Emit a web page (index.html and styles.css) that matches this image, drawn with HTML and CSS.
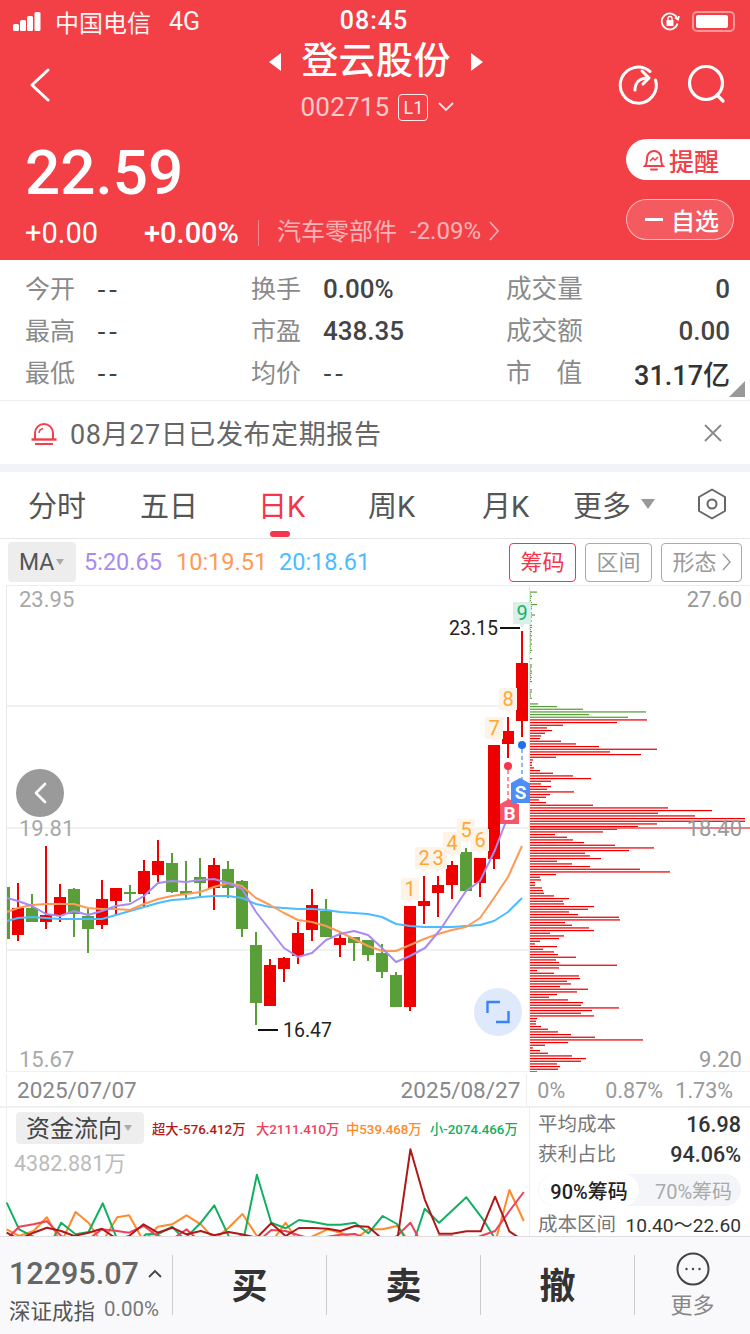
FILE: index.html
```html
<!DOCTYPE html>
<html lang="zh">
<head>
<meta charset="utf-8">
<title>登云股份</title>
<link rel="stylesheet" href="styles.css">
<script src="chart.js" defer></script>
</head>
<body>
<div class="page">
  <header class="head">
    <div class="status">
      <div class="status-left">
        <svg class="signal" width="34" height="22" viewBox="0 0 34 22"><rect x="0" y="14" width="6" height="7" rx="1.5"/><rect x="7" y="10" width="6" height="11" rx="1.5"/><rect x="14" y="6" width="6" height="15" rx="1.5"/><rect x="21.500" y="2" width="6" height="19" rx="1.5"/></svg>
        <span class="carrier">中国电信</span><span class="net">4G</span>
      </div>
      <div class="clock">08:45</div>
      <div class="status-right">
        <svg width="20" height="20" viewBox="0 0 20 20" fill="none" stroke="#fff" stroke-width="1.800"><path d="M17 7A8 8 0 1 0 17.500 12.500"/><path d="M15 6.500l3 2 1-3.500" /><rect x="6.500" y="9" width="7" height="6" fill="#fff" stroke="none"/><path d="M8 9V7.500a2 2 0 0 1 4 0V9" stroke-width="1.300"/></svg>
        <span class="battery"><span class="battery-fill"></span></span>
      </div>
    </div>
    <div class="nav">
      <svg class="back" width="22" height="34" viewBox="0 0 22 34" fill="none" stroke="#fff" stroke-width="3" stroke-linecap="round" stroke-linejoin="round"><path d="M19 2L3 17l16 15"/></svg>
      <div class="nav-mid">
        <div class="title-row"><i class="tri-l"></i><h1 class="title">登云股份</h1><i class="tri-r"></i></div>
        <div class="code-row"><span class="code">002715</span><span class="lv">L1</span><svg width="16" height="10" viewBox="0 0 16 10" fill="none" stroke="#fff" stroke-opacity=".85" stroke-width="1.800"><path d="M1 1l7 7 7-7"/></svg></div>
      </div>
      <div class="nav-icons">
        <svg width="42" height="42" viewBox="0 0 42 42" fill="none" stroke="#fff" stroke-width="3" stroke-linecap="round" stroke-linejoin="round"><path d="M33 8.500A18 18 0 1 0 38.500 17"/><path d="M18 27c0-7 4-12 13-12"/><path d="M25 8l7 7-6 6"/></svg>
        <svg width="42" height="42" viewBox="0 0 42 42" fill="none" stroke="#fff" stroke-width="3.200" stroke-linecap="round"><circle cx="20" cy="20" r="16.500"/><path d="M31 32l6 6"/></svg>
      </div>
    </div>
    <div class="quote">
      <div class="quote-left">
        <div class="price">22.59</div>
        <div class="change">
          <span class="chg1">+0.00</span><span class="chg2">+0.00%</span><i class="bar"></i>
          <span class="sector">汽车零部件</span><span class="sector-val">-2.09%</span>
          <svg width="11" height="20" viewBox="0 0 11 20" fill="none" stroke="#fff" stroke-opacity=".6" stroke-width="1.600"><path d="M1 1l8 9-8 9"/></svg>
        </div>
      </div>
      <div class="quote-right">
        <div class="remind">
          <svg width="24" height="26" viewBox="0 0 24 26" fill="none" stroke="#f0404a" stroke-width="2"><path d="M3 19c2-2 2-4 2-8a7 7 0 0 1 14 0c0 4 0 6 2 8z"/><path d="M9 22.500h6" stroke-linecap="round"/><path d="M8 14l3-3 2 2 3-3" stroke-width="1.500"/></svg>
          <span>提醒</span>
        </div>
        <div class="watch"><i class="dash"></i><span>自选</span></div>
      </div>
    </div>
  </header>

  <section class="info">
    <div class="cell"><span class="lab">今开</span><span class="val val-d">--</span></div>
    <div class="cell"><span class="lab">换手</span><span class="val">0.00%</span></div>
    <div class="cell cell-end"><span class="lab">成交量</span><span class="val">0</span></div>
    <div class="cell"><span class="lab">最高</span><span class="val val-d">--</span></div>
    <div class="cell"><span class="lab">市盈</span><span class="val">438.35</span></div>
    <div class="cell cell-end"><span class="lab">成交额</span><span class="val">0.00</span></div>
    <div class="cell"><span class="lab">最低</span><span class="val val-d">--</span></div>
    <div class="cell"><span class="lab">均价</span><span class="val val-d">--</span></div>
    <div class="cell cell-end"><span class="lab lab-wide">市<b class="sp"></b>值</span><span class="val val-big">31.17亿</span></div>
    <i class="corner"></i>
  </section>

  <section class="notice">
    <svg width="28" height="26" viewBox="0 0 28 26" fill="none" stroke="#f0404a" stroke-width="2"><path d="M5 19v-6a9 9 0 0 1 18 0v6"/><path d="M1.500 19.500h25" stroke-width="2.400"/><path d="M5 24h18" stroke-width="2"/><path d="M9 13a5 5 0 0 1 4-4.500" stroke-width="1.500"/></svg>
    <span class="notice-text">08月27日已发布定期报告</span>
    <svg class="notice-x" width="18" height="18" viewBox="0 0 18 18" stroke="#888" stroke-width="1.800"><path d="M1 1l16 16M17 1L1 17"/></svg>
  </section>

  <nav class="tabs">
    <span class="tab t1">分时</span>
    <span class="tab t2">五日</span>
    <span class="tab t3 on">日K</span>
    <span class="tab t4">周K</span>
    <span class="tab t5">月K</span>
    <span class="tab t6">更多<i class="caret"></i></span>
    <svg class="hex" width="30" height="32" viewBox="0 0 30 32" fill="none" stroke="#666" stroke-width="2"><path d="M15 1.500L28 9v14l-13 7.500L2 23V9z" stroke-linejoin="round"/><circle cx="15" cy="16" r="4.500"/></svg>
  </nav>

  <div class="tools">
    <div class="ma"><span>MA</span><i class="caret-s"></i></div>
    <span class="m5">5:20.65</span><span class="m10">10:19.51</span><span class="m20">20:18.61</span>
    <div class="tool-btns">
      <span class="tbtn tbtn-on">筹码</span>
      <span class="tbtn">区间</span>
      <span class="tbtn tbtn-w">形态<svg width="9" height="18" viewBox="0 0 9 18" fill="none" stroke="#999" stroke-width="1.400"><path d="M1 1l7 8-7 8"/></svg></span>
    </div>
  </div>

  <section class="chart">
    <svg id="kline" class="kline" width="750" height="487" viewBox="0 585 750 487"></svg>
    <span class="ax ax-l a1">23.95</span>
    <span class="ax ax-l a2">19.81</span>
    <span class="ax ax-l a3">15.67</span>
    <span class="ax ax-r a1">27.60</span>
    <span class="ax ax-r a2">18.40</span>
    <span class="ax ax-r a3">9.20</span>
    <span class="hi">23.15</span>
    <span class="lo">16.47</span>
    <span class="seq s1">1</span><span class="seq s2">2</span><span class="seq s3">3</span><span class="seq s4">4</span><span class="seq s5">5</span><span class="seq s6">6</span><span class="seq s7">7</span><span class="seq s8">8</span><span class="seq seq-g s9">9</span>
    <span class="trade b">B</span>
    <span class="trade s">S</span>
    <span class="circle-l"><svg width="14" height="22" viewBox="0 0 14 22" fill="none" stroke="#fff" stroke-width="2.600" stroke-linecap="round" stroke-linejoin="round"><path d="M12 2L3 11l9 9"/></svg></span>
    <span class="circle-r"><svg width="24" height="24" viewBox="0 0 24 24" fill="none" stroke="#3b82f6" stroke-width="2.400"><path d="M1.500 13V2H14M22.500 11v11H10"/></svg></span>
  </section>

  <div class="dates">
    <div class="dates-l"><span>2025/07/07</span><span>2025/08/27</span></div>
    <div class="dates-r"><span class="p0">0%</span><span>0.87%</span><span>1.73%</span></div>
  </div>

  <section class="lower">
    <div class="flow">
      <div class="flow-head">
        <div class="flow-chip"><span>资金流向</span><i class="caret-s"></i></div>
        <div class="legend"><span class="l1">超大-576.412万</span><span class="l2">大2111.410万</span><span class="l3">中539.468万</span><span class="l4">小-2074.466万</span></div>
      </div>
      <div class="flow-max">4382.881万</div>
      <svg id="flow" class="flow-svg" width="530" height="129" viewBox="0 1107 530 129"></svg>
    </div>
    <div class="cost">
      <div class="cost-row"><span class="lab2">平均成本</span><span class="val2">16.98</span></div>
      <div class="cost-row"><span class="lab2">获利占比</span><span class="val2">94.06%</span></div>
      <div class="seg"><span class="seg-on">90%筹码</span><span class="seg-off">70%筹码</span></div>
      <div class="cost-row cost-last"><span class="lab2">成本区间</span><span class="val2">10.40～22.60</span></div>
    </div>
  </section>

  <footer class="foot">
    <div class="idx">
      <div class="idx-top"><span class="idx-num">12295.07</span><svg width="14" height="9" viewBox="0 0 14 9" fill="none" stroke="#444" stroke-width="1.800"><path d="M1 8l6-6 6 6"/></svg></div>
      <div class="idx-bot"><span>深证成指</span><span class="idx-pct">0.00%</span></div>
    </div>
    <div class="act">买</div>
    <div class="act">卖</div>
    <div class="act">撤</div>
    <div class="more">
      <svg width="34" height="34" viewBox="0 0 34 34" fill="none" stroke="#444" stroke-width="2"><circle cx="17" cy="17" r="15.500"/><circle cx="10.500" cy="17" r="1.200" fill="#444" stroke="none"/><circle cx="17" cy="17" r="1.200" fill="#444" stroke="none"/><circle cx="23.500" cy="17" r="1.200" fill="#444" stroke="none"/></svg>
      <span>更多</span>
    </div>
  </footer>
</div>
</body>
</html>
```
FILE: styles.css
```css
* { box-sizing: border-box; margin: 0; padding: 0; }
html, body { width: 750px; height: 1334px; overflow: hidden; background: #fff; }
body { font-family: Roboto, "Noto Sans CJK SC", sans-serif; color: #333; }
i { display: block; font-style: normal; }
.page { width: 750px; height: 1334px; display: flex; flex-direction: column; position: relative; overflow: hidden; }

/* header */
.head { height: 260px; background: #f24046; color: #fff; display: flex; flex-direction: column; }
.status { height: 42px; display: grid; grid-template-columns: 1fr auto 1fr; align-items: center; padding: 0 15px 0 13px; }
.status-left { display: flex; align-items: center; }
.signal { fill: #fff; margin-right: 8px; }
.carrier { font-size: 24px; opacity: .95; }
.net { font-size: 25px; margin-left: 18px; opacity: .95; }
.clock { font-size: 25px; font-weight: 500; letter-spacing: 1px; margin-bottom: 2px; }
.status-right { display: flex; justify-content: flex-end; align-items: center; gap: 12px; }
.battery { width: 43px; height: 21px; border: 2px solid rgba(255,255,255,.45); border-radius: 5px; padding: 2px; display: block; }
.battery-fill { display: block; height: 100%; width: 90%; background: #fff; border-radius: 2px; }

.nav { height: 84px; display: grid; grid-template-columns: 1fr auto 1fr; align-items: start; padding: 0 22px 0 29px; }
.back { margin-top: 26px; }
.nav-mid { display: flex; flex-direction: column; align-items: center; width: 240px; margin-left: -5px; }
.title-row { display: flex; align-items: center; gap: 20px; height: 40px; }
.title { font-size: 37px; font-weight: 500; line-height: 40px; letter-spacing: .4px; }
.tri-l { width: 0; height: 0; border: 8px solid transparent; border-left: 0; border-right: 12px solid #fff; border-top-width: 9px; border-bottom-width: 9px; }
.tri-r { width: 0; height: 0; border: 8px solid transparent; border-right: 0; border-left: 12px solid #fff; border-top-width: 9px; border-bottom-width: 9px; }
.code-row { display: flex; align-items: center; height: 38px; margin-top: 6px; margin-left: 3px; }
.code { font-size: 26px; letter-spacing: .2px; opacity: .72; }
.lv { width: 30px; height: 27px; border: 1px solid #fff; border-radius: 4px; font-size: 18px; line-height: 25px; text-align: center; margin: 0 10px 0 9px; opacity: .9; }
.nav-icons { display: flex; justify-content: flex-end; gap: 27px; margin-top: 21px; }

.quote { flex: 1; display: flex; justify-content: space-between; }
.quote-left { padding: 8px 0 0 25px; }
.price { font-size: 62px; line-height: 78px; font-weight: 500; }
.change { display: flex; align-items: center; height: 30px; margin-top: 6px; }
.chg1 { font-size: 29px; width: 119px; }
.chg2 { font-size: 29px; width: 94px; font-weight: 500; white-space: nowrap; }
.bar { width: 1px; height: 26px; background: rgba(255,255,255,.4); margin: 0 18px 0 20px; }
.sector { font-size: 24px; opacity: .6; white-space: nowrap; margin-bottom: 7px; }
.sector-val { font-size: 24px; opacity: .6; margin: 0 8px 4px 13px; white-space: nowrap; }
.change svg { margin-bottom: 4px; }
.quote-right { display: flex; flex-direction: column; align-items: flex-end; padding-top: 13px; gap: 19px; }
.remind { width: 124px; height: 41px; background: #fff; border-radius: 21px 0 0 21px; color: #f0404a; display: flex; align-items: center; padding-left: 16px; gap: 3px; font-size: 25px; font-weight: 500; }
.watch { width: 108px; height: 41px; margin-right: 16px; background: rgba(255,255,255,.14); border: 1px solid rgba(255,255,255,.6); border-radius: 21px; display: flex; align-items: center; padding-left: 18px; gap: 8px; font-size: 24px; font-weight: 500; }
.dash { width: 18px; height: 3px; background: #fff; }

/* info */
.info { height: 140px; display: grid; grid-template-columns: 226px 255px 1fr; grid-auto-rows: 42px; padding: 8px 20px 0 25px; position: relative; }
.cell { display: flex; align-items: center; font-size: 25px; }
.cell-end { justify-content: space-between; }
.lab { color: #8a8a8a; width: 72px; font-size: 25px; white-space: nowrap; margin-bottom: 4px; }
.cell-end .lab { width: auto; font-size: 25.600px; margin-bottom: 6px; }
.lab-wide { display: flex; justify-content: space-between; }
.lab-wide .sp { display: block; width: 25px; }
.val { font-size: 26px; font-weight: 500; color: #444; white-space: nowrap; }
.val-d { font-family: "DejaVu Sans", sans-serif; font-size: 25px; letter-spacing: 2.500px; font-weight: 400; }
.val-big { font-size: 27px; color: #333; }
.corner { position: absolute; right: 5px; bottom: 3px; width: 0; height: 0; border-left: 16px solid transparent; border-bottom: 16px solid #999; }

.notice { height: 72px; border-top: 1px solid #eee; border-bottom: 8px solid #f2f3f8; display: flex; align-items: center; padding: 0 28px 0 30px; }
.notice-text { font-size: 27px; color: #666; margin-left: 12px; flex: 1; letter-spacing: .6px; white-space: nowrap; }

/* tabs */
.tabs { height: 67px; display: grid; grid-template-columns: 112px 118px 110px 114px 91px 123px 1fr; align-items: center; padding: 0 0 2px 28px; border-bottom: 1px solid #e6e6e6; position: relative; }
.tab { font-size: 29px; color: #555; white-space: nowrap; display: flex; align-items: center; }
.tab.on { color: #f4354a; position: relative; }
.tab.on::after { content: ""; position: absolute; left: 12px; top: 48px; width: 20px; height: 6px; border-radius: 3px; background: #f4354a; }
.t4, .t5 { font-size: 29px; }
.caret { width: 0; height: 0; border: 7.500px solid transparent; border-top: 10px solid #999; border-bottom: 0; margin-left: 10px; }
.hex { margin-left: 1px; }

.tools { height: 46px; display: flex; align-items: center; padding: 3px 8px 3px 8px; font-size: 23.500px; position: relative; }
.ma { width: 68px; height: 40px; background: #ededed; border-radius: 4px; display: flex; align-items: center; padding-left: 11px; font-size: 23px; color: #555; margin-right: 8px; }
.caret-s { width: 0; height: 0; border: 4.500px solid transparent; border-top: 6px solid #aaa; border-bottom: 0; margin-left: 2px; }
.m5 { color: #a78bf0; width: 92px; }
.m10 { color: #ff9a56; width: 103px; }
.m20 { color: #4dbcff; }
.tool-btns { margin-left: auto; display: flex; gap: 9px; }
.tbtn { width: 67px; height: 39px; border: 1px solid #aaa; border-radius: 4px; font-size: 22px; color: #999; display: flex; align-items: center; justify-content: center; gap: 5px; padding-bottom: 4px; }
.tbtn svg { margin-top: 4px; }
.tbtn-on { color: #f4354a; border-color: #f4354a; }
.tbtn-w { width: 81px; }

/* chart */
.chart { height: 487px; position: relative; flex: none; }
.kline { display: block; }
.ax { position: absolute; font-size: 22px; line-height: 26px; color: #a8a8a8; }
.ax-l { left: 19px; }
.ax-r { right: 8px; color: #999; }
.a1 { top: 2px; }
.a2 { top: 231px; }
.a3 { top: 462px; }
.hi, .lo { position: absolute; font-size: 19.500px; line-height: 24px; color: #222; }
.hi { left: 449px; top: 32px; }
.lo { left: 283px; top: 434px; }
.seq { position: absolute; width: 18px; height: 22px; background: #fdf3e6; color: #ffa733; font-size: 20px; line-height: 22px; text-align: center; }
.seq::after { content: ""; position: absolute; left: 6px; top: 22px; width: 0; height: 0; border-left: 3px solid transparent; border-right: 3px solid transparent; border-top: 3px solid #fdf3e6; }
.seq-g { background: #d8f0e6; color: #18b070; }
.seq-g::after { border-top-color: #d8f0e6; }
.s1 { left: 401px; top: 293px; }
.s2 { left: 415px; top: 262px; }
.s3 { left: 429px; top: 262px; }
.s4 { left: 443px; top: 247px; }
.s5 { left: 457px; top: 234px; }
.s6 { left: 471px; top: 244px; }
.s7 { left: 485px; top: 132px; }
.s8 { left: 499px; top: 103px; }
.s9 { left: 513px; top: 17px; }
.trade { position: absolute; width: 19px; height: 20px; color: #fff; font-size: 19px; font-weight: 700; line-height: 20px; text-align: center; }
.trade.b { left: 500px; top: 219px; background: #f5566a; }
.trade.s { left: 511px; top: 198px; background: #4c8df6; }
.trade::before { content: ""; position: absolute; left: 0; top: -5px; width: 0; height: 0; border-left: 9.500px solid transparent; border-right: 9.500px solid transparent; }
.trade.b::before { border-bottom: 5px solid #f5566a; }
.trade.s::before { border-bottom: 5px solid #4c8df6; }
.circle-l { position: absolute; left: 16px; top: 184px; width: 48px; height: 48px; border-radius: 50%; background: #9a9a9a; display: flex; align-items: center; justify-content: center; }
.circle-r { position: absolute; left: 474px; top: 403px; width: 48px; height: 48px; border-radius: 50%; background: #dfe9fc; display: flex; align-items: center; justify-content: center; }

.dates { height: 36px; display: flex; border-bottom: 2px solid #f0f0f0; font-size: 22.500px; color: #888; flex: none; padding-top: 2px; }
.dates-l { width: 530px; padding: 0 6px 0 17px; background: linear-gradient(#eee, #eee) 6px 0 / 1px 100% no-repeat; border-right: 1px solid #eee; display: flex; justify-content: space-between; align-items: center; }
.dates-r { flex: 1; padding: 0 17px 0 10px; display: flex; align-items: center; color: #999; font-size: 21.500px; }
.dates-r .p0 { width: 68px; }
.dates-r span:nth-child(2) { width: 70px; }

/* lower */
.lower { height: 128px; display: flex; flex: none; overflow: hidden; }
.flow { width: 530px; position: relative; border-right: 1px solid #eee; background: linear-gradient(#eee, #eee) 6px 0 / 1px 100% no-repeat; }
.flow-head { display: flex; align-items: center; padding: 4px 0 0 16px; position: relative; z-index: 1; }
.flow-chip { width: 128px; height: 32px; background: #eee; border-radius: 4px; display: flex; align-items: center; padding-left: 10px; font-size: 24px; color: #444; }
.flow-chip span { margin-bottom: 3px; }
.legend { display: flex; margin-left: 8px; font-size: 13.300px; font-weight: 500; white-space: nowrap; }
.legend span { display: block; }
.l1 { color: #b01818; width: 104px; }
.l2 { color: #f0405a; width: 90px; }
.l3 { color: #ff8a2a; width: 84px; }
.l4 { color: #10b060; }
.flow-max { position: absolute; left: 14px; top: 43px; font-size: 21.500px; line-height: 26px; color: #bbb; z-index: 1; }
.flow-svg { position: absolute; left: 0; top: 0; display: block; }
.cost { flex: 1; padding: 0 9px 0 8px; display: flex; flex-direction: column; }
.cost-row { height: 30px; display: flex; align-items: center; justify-content: space-between; }
.lab2 { font-size: 19.500px; color: #777; white-space: nowrap; margin-bottom: 3px; }
.val2 { font-size: 21.500px; font-weight: 500; color: #333; white-space: nowrap; }
.cost-row:first-child { margin-top: 1px; }
.seg { height: 34px; margin-top: 5px; background: #f3f5f9; border-radius: 17px; display: flex; align-items: center; padding: 0 1px; font-size: 20px; }
.seg-on { width: 100px; height: 32px; border-radius: 16px; background: #fff; color: #222; font-weight: 500; display: flex; align-items: center; justify-content: center; }
.seg-off { flex: 1; text-align: center; color: #aaa; padding-left: 8px; }
.cost-last { margin-top: 3px; }
.cost-last .val2 { font-weight: 400; font-size: 19.200px; }

/* footer */
.foot { flex: 1; background: #f9f9fb; border-top: 1px solid #ddd; display: grid; grid-template-columns: 172px 154px 154px 154px 1fr; align-items: center; padding-bottom: 2px; }
.idx { padding: 11px 0 0 9px; display: flex; flex-direction: column; justify-content: center; }
.idx-top { display: flex; align-items: center; gap: 9px; height: 38px; }
.idx-num { font-size: 30.500px; color: #666; font-weight: 500; }
.idx-bot { display: flex; align-items: center; font-size: 21.500px; color: #555; height: 34px; gap: 9px; white-space: nowrap; }
.idx-pct { color: #777; font-size: 20.500px; }
.act { height: 60px; border-left: 1px solid #ccc; display: flex; align-items: center; justify-content: center; font-size: 36px; font-weight: 700; color: #333; padding-bottom: 4px; }
.more { height: 60px; border-left: 1px solid #ccc; display: flex; flex-direction: column; align-items: center; font-size: 22px; color: #888; position: relative; }
.more svg { position: absolute; top: -3px; }
.more span { position: absolute; top: 35px; line-height: 32px; }
```
FILE: chart.js
```js
var NS = "http://www.w3.org/2000/svg";
function el(parent, name, attrs) {
  var n = document.createElementNS(NS, name);
  for (var k in attrs) n.setAttribute(k, attrs[k]);
  parent.appendChild(n);
  return n;
}
var RED = "#ee0000", GREEN = "#5a9e3a";
var svg = document.getElementById("kline");

/* frame and grid */
[706, 828, 950].forEach(function (y) {
  el(svg, "rect", { x: 7, y: y - 1, width: 522, height: 2, fill: "#f1f1f1" });
});
el(svg, "rect", { x: 6, y: 585, width: 744, height: 1, fill: "#eee" });
el(svg, "rect", { x: 6, y: 1071, width: 744, height: 2, fill: "#f0f0f0" });
el(svg, "rect", { x: 6, y: 585, width: 1, height: 487, fill: "#e8e8e8" });
el(svg, "rect", { x: 529, y: 585, width: 1, height: 487, fill: "#e4e4e4" });

/* x, wick top, body top, body bottom, wick bottom, up? */
var candles = [
  [4,887,887,939,939,0],[18,883,908,935,941,1],[32,894,908,922,922,0],[46,846,915,922,929,1],
  [60,884,897,915,922,1],[74,888,889,914,937,0],[88,909,916,929,953,0],[102,880,899,925,929,1],
  [116,888,888,901,915,1],[130,885,892,894,902,0],[144,860,871,894,907,1],[158,840,861,875,882,1],
  [172,853,863,892,893,0],[186,861,891,894,898,0],[200,858,877,883,896,0],[214,858,865,888,910,1],
  [228,861,869,888,898,0],[242,880,881,929,937,0],[256,932,945,1003,1025,0],[270,959,965,1006,1006,1],
  [284,957,958,969,982,1],[298,922,933,956,964,1],[312,889,905,930,941,1],[326,899,911,937,937,0],
  [340,933,938,945,957,1],[354,937,937,943,961,0],[368,940,940,955,961,0],[382,944,953,972,978,0],
  [396,972,975,1007,1007,0],[410,906,906,1007,1011,1],[424,876,901,906,924,1],[438,876,885,893,917,1],
  [452,861,865,885,899,1],[466,848,852,891,892,0],[480,858,858,883,897,1],[494,745,745,859,869,1],
  [508,717,731,744,758,1],[522,631,663,721,737,1]
];
candles.forEach(function (c) {
  var color = c[5] ? RED : GREEN;
  var x = Math.max(c[0] - 1, 7);
  el(svg, "rect", { x: x, y: c[1], width: 2, height: c[4] - c[1], fill: color });
  var bx = Math.max(c[0] - 6, 7);
  el(svg, "rect", { x: bx, y: c[2], width: c[0] + 6 - bx, height: Math.max(c[3] - c[2], 2), fill: color });
});

/* moving averages */
function line(parent, pts, color, width) {
  el(parent, "polyline", { points: pts, fill: "none", stroke: color, "stroke-width": width, "stroke-linejoin": "round" });
}
line(svg, "7,921 18,918 32,917 46,918 60,919 74,919 88,919 102,919 116,915 130,911 144,907 158,903 172,900 186,899 200,897 214,896 228,896 242,898 256,904 270,907 284,908 298,909 312,909 326,910 340,912 354,913 368,914 382,917 396,924 410,926 424,927 438,927 452,927 466,926 480,925 494,921 508,912 522,898", "#4dbcff", 2);
line(svg, "7,912 18,908 32,905 46,904 60,904 74,904 88,908 102,909 116,909 130,910 144,904 158,899 172,896 186,894 200,892 214,887 228,883 242,886 256,898 270,905 284,913 298,920 312,922 326,926 340,932 354,939 368,946 382,951 396,951 410,945 424,939 438,934 452,930 466,927 480,918 494,898 508,877 522,846", "#ff9a56", 2);
line(svg, "7,898 18,901 32,906 46,914 60,916 74,911 88,915 102,911 116,906 130,904 144,896 158,883 172,881 186,882 200,880 214,879 228,883 242,889 256,912 270,930 284,948 298,957 312,953 326,940 340,934 354,931 368,935 382,948 396,962 410,956 425,948 440,930 466,891 480,881 495,850 513,803 522,778", "#a78bf0", 2);

/* chip distribution */
var chipX = 530, step = 8 / 3;
var greenTop = [7,1,2,1,1,2,7,2,2,1,2,5,2,1,2,1,2,2,1,2,1,2,1,2,1,2,1,1,2,1,0,0,2,0,0,2,2,1,2,2,1,2,1,2,0,0,0,2,2,1,1,2];
greenTop.forEach(function (w, i) {
  if (w) el(svg, "rect", { x: chipX, y: 591.5 + i * step * 0.78, width: w, height: 1.200, fill: GREEN });
});
var greens = [8,27,53,116,59,98];
greens.forEach(function (w, i) {
  el(svg, "rect", { x: chipX, y: 703.3 + i * step, width: w, height: 1.250, fill: GREEN });
});
var reds = [117,87,33,17,22,15,11,10,31,46,69,127,80,111,26,3,2,2,4,10,23,43,61,21,11,21,17,44,20,16,9,16,63,138,182,128,165,215,215,127,108,87,73,25,37,43,
  54,85,124,99,55,60,71,27,42,60,110,140,26,10,11,5,5,12,13,14,24,39,33,34,64,58,39,48,89,90,35,42,59,64,20,34,29,10,5,27,13,24,28,46,26,29,87,29,7,24,49,50,37,41,30,58,47,27,19,38,53,51,89,62,51,64,7,6,6,11,18,28,41,65,113,38,15,3,10,18,42,56,51,27,30,28,7,3];
reds.forEach(function (w, i) {
  el(svg, "rect", { x: chipX, y: 719.3 + i * step, width: w, height: 1.250, fill: RED });
});
el(svg, "rect", { x: 530, y: 827, width: 220, height: 2, fill: "#f07a80" });

/* high / low ticks and trade markers */
el(svg, "rect", { x: 500, y: 627, width: 20, height: 2, fill: "#111" });
el(svg, "rect", { x: 258, y: 1029, width: 20, height: 2, fill: "#111" });
el(svg, "line", { x1: 508, y1: 770, x2: 508, y2: 800, stroke: "#f9909c", "stroke-width": 2, "stroke-dasharray": "4 3" });
el(svg, "line", { x1: 522, y1: 749, x2: 522, y2: 779, stroke: "#8db8fa", "stroke-width": 2, "stroke-dasharray": "4 3" });
el(svg, "circle", { cx: 508, cy: 766, r: 4, fill: "#f4354a" });
el(svg, "circle", { cx: 522, cy: 745, r: 4, fill: "#1f6ff0" });

/* capital flow, traced from the reference (x scaled from a 1568 wide crop, y from a 3x crop at 1075) */
var flow = document.getElementById("flow");
var sx = 750 / 1568;
function flowLine(raw, color) {
  var pts = raw.map(function (p) { return (p[0] * sx).toFixed(1) + "," + (1075 + p[1] / 3).toFixed(1); }).join(" ");
  line(flow, pts, color, 2);
}
flowLine([[14,460],[40,480],[70,465],[98,424],[128,500],[158,408],[185,440],[213,500],[245,424],[270,418],[300,495],[330,452],[360,445],[390,418],[420,445],[448,490],[478,455],[507,414],[537,480],[567,500],[597,440],[625,500],[655,480],[685,460],[712,470],[742,490],[770,460],[800,460],[830,450],[858,500],[888,510],[918,480],[945,480],[975,510],[1005,510],[1035,500],[1065,342],[1095,435]], "#ff8a2a");
flowLine([[14,380],[40,460],[70,482],[100,520],[128,440],[158,475],[185,468],[215,382],[245,490],[275,520],[305,475],[330,475],[360,452],[385,490],[420,440],[448,388],[478,480],[505,520],[537,296],[567,440],[597,457],[625,432],[655,438],[685,446],[712,446],[742,440],[770,472],[800,420],[830,444],[860,520],[888,398],[918,440],[975,364],[1010,430],[1040,500]], "#10b060");
flowLine([[14,490],[40,452],[70,445],[98,436],[128,480],[155,495],[185,490],[213,460],[245,465],[270,470],[300,450],[330,480],[360,490],[390,460],[420,500],[448,500],[478,490],[505,480],[537,500],[567,462],[597,465],[625,478],[655,490],[685,482],[712,476],[742,474],[770,490],[800,500],[830,480],[858,440],[888,520],[918,490],[945,500],[975,500],[1005,480],[1035,465],[1065,405],[1095,348]], "#f0405a");
flowLine([[14,470],[40,490],[70,470],[98,455],[128,465],[155,480],[185,470],[213,458],[245,490],[270,480],[300,445],[330,470],[360,455],[390,475],[420,465],[448,478],[478,468],[505,475],[537,485],[567,442],[597,480],[625,456],[655,456],[685,458],[712,465],[742,450],[770,452],[800,490],[830,500],[858,220],[888,370],[918,473],[945,473],[975,466],[1005,466],[1035,362],[1065,466],[1095,495]], "#b01818");
```
